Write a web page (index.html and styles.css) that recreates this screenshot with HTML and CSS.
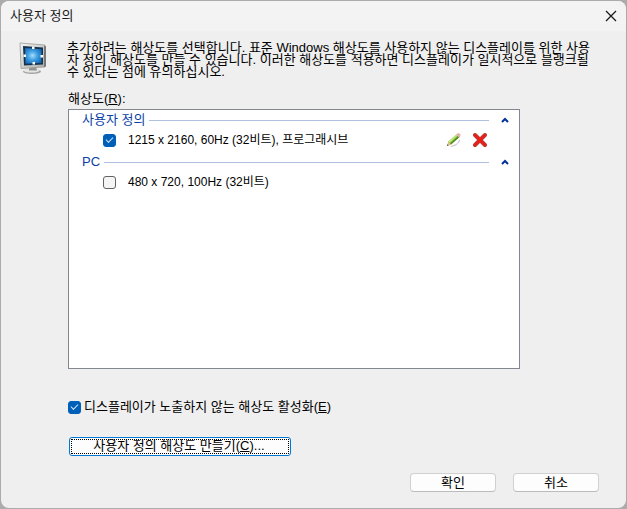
FILE: index.html
```html
<!DOCTYPE html>
<html lang="ko">
<head>
<meta charset="utf-8">
<title>사용자 정의</title>
<link rel="stylesheet" href="styles.css">
</head>
<body>
<main class="dialog">
  <header class="titlebar">
    <h1 class="title">사용자 정의</h1>
    <button class="plain close" type="button" aria-label="닫기">
      <svg width="12" height="12" viewBox="0 0 12 12"><path d="M1 1l10 10M11 1L1 11" fill="none" stroke="#1a1a1a" stroke-width="1.3"/></svg>
    </button>
  </header>
  <form class="content">
    <div class="intro">
      <svg class="monitor" width="28" height="33" viewBox="0 0 28 33" aria-hidden="true">
        <defs>
          <radialGradient id="screen" cx="46%" cy="48%" r="62%">
            <stop offset="0" stop-color="#a8ddfa"/><stop offset=".45" stop-color="#41a2e4"/><stop offset="1" stop-color="#1668b4"/>
          </radialGradient>
          <linearGradient id="frame" x1="0" y1="0" x2="1" y2="1">
            <stop offset="0" stop-color="#f4f4f2"/><stop offset="1" stop-color="#aaaaa6"/>
          </linearGradient>
        </defs>
        <ellipse cx="13" cy="29.5" rx="9" ry="2.6" fill="#a3a3a3"/>
        <ellipse cx="12.5" cy="28.6" rx="8" ry="1.9" fill="#e6e6e4"/>
        <path d="M10 24h7l1 4.500h-8z" fill="#92928f"/>
        <path d="M1 1l25 2v22L2 26.500z" fill="url(#frame)" stroke="#9b9b98" stroke-width=".8"/>
        <path d="M25 3.500l2 1v20l-2 .5z" fill="#777"/>
        <path d="M4 4L24 5.500v17L5 23.500z" fill="#12324f"/>
        <path d="M6 6L22.500 7.200v13.800L6.500 21.800z" fill="url(#screen)"/>
        <path d="M13 4.500h2.500V7H13zM13.500 20H16v2.500h-2.500zM4.500 12.500H7V15H4.500zM21.500 13H24v2.500h-2.500z" fill="#fff"/>
      </svg>
      <p class="text">추가하려는 해상도를 선택합니다. 표준 Windows 해상도를 사용하지 않는 디스플레이를 위한 사용<br>자 정의 해상도를 만들 수 있습니다. 이러한 해상도를 적용하면 디스플레이가 일시적으로 블랭크될<br>수 있다는 점에 유의하십시오.</p>
    </div>
    <div class="fields">
      <div class="list-label" id="res-label">해상도(<u>R</u>):</div>
      <div class="list" role="group" aria-labelledby="res-label">
        <div class="group">
          <h2 class="group-name">사용자 정의</h2><span class="rule"></span>
          <button class="plain" type="button" aria-label="사용자 정의 접기"><svg width="8" height="6" viewBox="0 0 8 6"><path d="M1 5l3-3 3 3" fill="none" stroke="#003399" stroke-width="2"/></svg></button>
        </div>
        <div class="row">
          <input class="check" type="checkbox" id="r1" checked>
          <label class="row-text" for="r1">1215 x 2160, 60Hz (32비트), 프로그래시브</label>
          <button class="plain" type="button" aria-label="편집">
            <svg width="16" height="16" viewBox="0 0 16 16">
              <path d="M4 14.500l7-3 3-5v3l-4 4-4 1.500z" fill="#bbb" opacity=".7"/>
              <path d="M1 14l1.500-4.500L11 2l3 2.500L5 12.500z" fill="#76b82e"/>
              <path d="M2.500 9.500L11 2l1.200 1L4 10.700z" fill="#c4e77d"/>
              <path d="M4 11.700l8.700-8 1.300.8L5 12.500z" fill="#4f8920"/>
              <path d="M10.200 2.800L12 1l2.500 1-.3 2.600-1.200 1z" fill="#e8afae"/>
              <path d="M1 14l1.500-4.500L5 12.500z" fill="#e5c18e"/><path d="M1 14l.5-1.700 1 1z" fill="#333"/>
            </svg>
          </button>
          <button class="plain" type="button" aria-label="삭제">
            <svg width="16" height="16" viewBox="0 0 16 16"><path d="M3 3l10 10M13 3L3 13" fill="none" stroke="#a83c38" stroke-width="4" stroke-linecap="round"/><path d="M3 3l10 10M13 3L3 13" fill="none" stroke="#e6211a" stroke-width="3" stroke-linecap="round"/></svg>
          </button>
        </div>
        <div class="group">
          <h2 class="group-name">PC</h2><span class="rule"></span>
          <button class="plain" type="button" aria-label="PC 접기"><svg width="8" height="6" viewBox="0 0 8 6"><path d="M1 5l3-3 3 3" fill="none" stroke="#003399" stroke-width="2"/></svg></button>
        </div>
        <div class="row">
          <input class="check" type="checkbox" id="r2">
          <label class="row-text" for="r2">480 x 720, 100Hz (32비트)</label>
        </div>
      </div>
      <div class="enable">
        <input class="check" type="checkbox" id="enable" checked>
        <label for="enable">디스플레이가 노출하지 않는 해상도 활성화(<u>E</u>)</label>
      </div>
      <button class="create" type="button"><span class="focus">사용자 정의 해상도 만들기(<u>C</u>)...</span></button>
    </div>
    <footer class="actions">
      <button class="btn" type="submit">확인</button>
      <button class="btn" type="button">취소</button>
    </footer>
  </form>
</main>
</body>
</html>
```
FILE: styles.css
```css
* { box-sizing: border-box; }

body {
  margin: 0;
  padding: 1px;
  min-height: 100vh;
  display: flex;
  background: #ababab;
  color: #000;
  font: 13px/18px "Liberation Sans", "Noto Sans CJK KR", sans-serif;
}

button, input { font: inherit; color: inherit; }
svg { display: block; }

.dialog {
  flex: 1;
  display: flex;
  flex-direction: column;
  background: #efefef;
  border-radius: 8px;
  overflow: hidden;
}

.titlebar {
  display: flex;
  align-items: center;
  justify-content: space-between;
  height: 30px;
  padding: 0 9px;
  background: #f3f3f3;
}

.title { margin: 0; font-size: 13px; font-weight: 400; color: #1a1a1a; }

.plain {
  display: flex;
  padding: 0;
  border: 0;
  background: none;
}

.content {
  flex: 1;
  display: flex;
  flex-direction: column;
  padding: 11px 27px 16px 18px;
}

.intro { display: flex; gap: 20px; }
.monitor { flex: none; }
.text { margin: 0; line-height: 12px; white-space: nowrap; }

.fields {
  flex: 1;
  display: flex;
  flex-direction: column;
  margin: 12px 79px 0 49px;
}

.list-label { padding-bottom: 1px; }

.list {
  flex: 1;
  padding: 1px 10px 0 13px;
  border: 1px solid #828790;
  background: #fff;
}

.group { display: flex; align-items: center; height: 18px; }
.group-name { margin: 0; font-size: 13px; font-weight: 400; color: #0a3fa6; }
.rule { flex: 1; height: 1px; margin: 0 12px 0 4px; background: #b0c0e0; }

.row {
  display: flex;
  align-items: center;
  gap: 10px;
  height: 24px;
  padding: 0 21px 2px;
}
.row-text { flex: 1; padding-left: 2px; font-size: 12px; }

.check {
  appearance: none;
  flex: none;
  width: 13px;
  height: 13px;
  margin: 0;
  border: 1px solid #626262;
  border-radius: 3px;
  background: #f5f5f5;
}
.check:checked {
  display: grid;
  place-items: center;
  border-color: #005fb8;
  background: #005fb8;
}
.check:checked::before {
  content: "";
  width: 6px;
  height: 3px;
  margin-bottom: 2px;
  border: solid #d5e5f4;
  border-width: 0 0 1px 1px;
  transform: rotate(-45deg);
}

.enable {
  display: flex;
  align-items: center;
  gap: 3px;
  margin: 29px 0 21px;
}

.create {
  align-self: flex-start;
  width: 222px;
  height: 19px;
  margin-left: 1px;
  padding: 1px;
  border: 1px solid #0078d4;
  border-radius: 3px;
  background: #fdfdfd;
}
.focus {
  display: block;
  height: 15px;
  padding-right: 2px;
  border: 1px dotted #000;
  line-height: 12px;
}

.actions {
  display: flex;
  justify-content: flex-end;
  gap: 17px;
  margin-top: 17px;
}
.btn {
  width: 86px;
  height: 19px;
  padding: 0;
  border: 1px solid #d0d0d0;
  border-bottom-color: #bbb;
  border-radius: 4px;
  background: #fdfdfd;
  line-height: 16px;
}
```
